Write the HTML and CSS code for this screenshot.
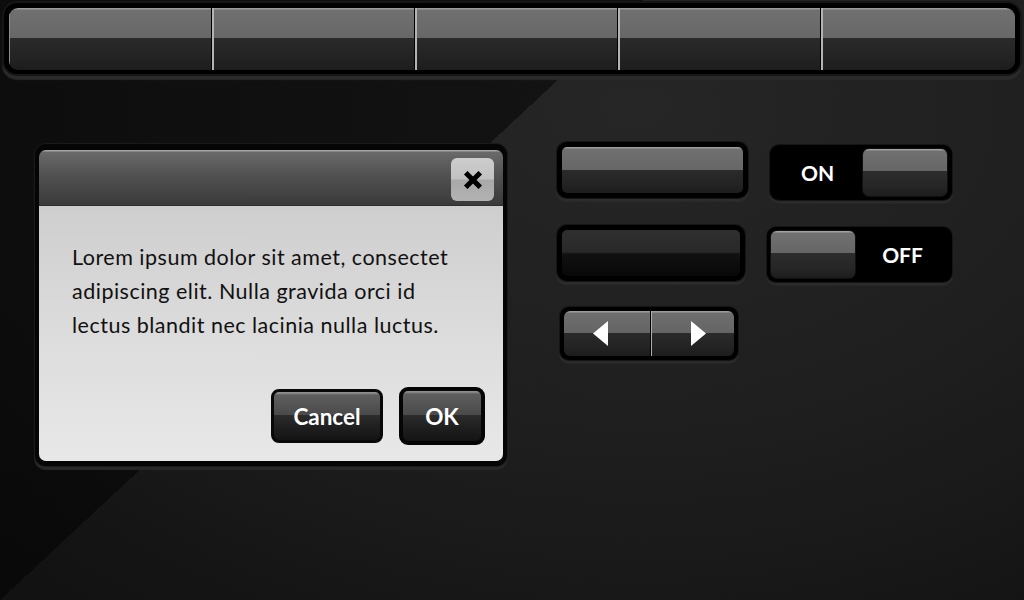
FILE: index.html
```html
<!DOCTYPE html>
<html lang="en">
<head>
<meta charset="utf-8">
<title>Dark UI Kit</title>
<link rel="stylesheet" href="styles.css">
</head>
<body>
<div class="screen">
  <nav class="topnav">
    <div class="navbar">
      <span class="seg"></span>
      <span class="seg"></span>
      <span class="seg"></span>
      <span class="seg"></span>
      <span class="seg"></span>
    </div>
  </nav>
  <main class="content">
    <section class="dialog">
      <header class="dlg-title">
        <button class="close" aria-label="Close">
          <svg width="20" height="18" viewBox="0 0 20 18"><path d="M4.5 3.5 L15.5 14.5 M15.5 3.5 L4.5 14.5" stroke="#000" stroke-width="5" stroke-linecap="square" fill="none"/></svg>
        </button>
      </header>
      <div class="dlg-body">
        <p class="dlg-text">Lorem ipsum dolor sit amet, consectet<br>adipiscing elit. Nulla gravida orci id<br>lectus blandit nec lacinia nulla luctus.</p>
        <div class="dlg-actions">
          <button class="dbtn cancel">Cancel</button>
          <button class="dbtn ok">OK</button>
        </div>
      </div>
    </section>
    <div class="controls">
      <button class="gbtn btn-a"></button>
      <div class="toggle toggle-on">
        <span class="tlabel">ON</span>
        <span class="knob"></span>
      </div>
      <button class="gbtn pressed btn-b"></button>
      <div class="toggle toggle-off">
        <span class="knob"></span>
        <span class="tlabel">OFF</span>
      </div>
      <div class="arrows">
        <button class="aseg aleft"><svg width="15" height="25" viewBox="0 0 15 25"><polygon points="0,12.5 15,0 15,25" fill="#fff"/></svg></button>
        <button class="aseg aright"><svg width="15" height="25" viewBox="0 0 15 25"><polygon points="15,12.5 0,0 0,25" fill="#fff"/></svg></button>
      </div>
    </div>
  </main>
</div>
</body>
</html>
```
FILE: styles.css
```css
* { box-sizing: border-box; }
html, body { margin: 0; padding: 0; }
body {
  width: 1024px;
  height: 600px;
  overflow: hidden;
  font-family: Lato, "Open Sans", sans-serif;
  background: #111;
}
button {
  font-family: inherit;
  padding: 0;
  margin: 0;
  cursor: pointer;
}
.screen {
  width: 1024px;
  height: 600px;
  display: flex;
  flex-direction: column;
  background:
    linear-gradient(137deg, rgba(0,0,0,0.5) 38.6%, rgba(0,0,0,0) 38.6%),
    radial-gradient(ellipse 900px 620px at 62% 18%, #262626 0%, #1e1e1e 55%, #121212 100%);
}

/* top navigation */
.topnav {
  margin: 3px 4px 0;
  padding: 5px 5px 4px;
  background: #000;
  border-radius: 13px;
  box-shadow: 0 0 0 2px #161616, 0 4px 1px 2px #2a2a2a;
}
.navbar {
  display: flex;
  height: 62px;
  border-radius: 9px;
  overflow: hidden;
}
.seg {
  flex: 0 0 203px;
  background: linear-gradient(to bottom, #9a9a9a 0, #9a9a9a 1px, #707070 2px, #676767 49%, #2a2a2a 49%, #232323 80%, #1d1d1d 100%);
}
.seg:first-child { flex-basis: 202px; box-shadow: inset 1px 0 0 #8a8a8a; }
.seg:last-child { flex: 1; }
.seg + .seg {
  border-left: 1px solid #000;
  box-shadow: inset 2px 0 0 #b4b4b4;
}

/* main content */
.content {
  display: flex;
  align-items: flex-start;
  padding: 68px 0 0 35px;
  gap: 50px;
}

/* dialog */
.dialog {
  width: 472px;
  height: 322px;
  margin-top: 2px;
  padding: 6px 4px 5px;
  background: #050505;
  border-radius: 11px;
  display: flex;
  flex-direction: column;
  box-shadow: 0 0 0 1px #1a1a1a, 0 3px 1px 1px #282828;
}
.dlg-title {
  height: 56px;
  flex: none;
  display: flex;
  justify-content: flex-end;
  align-items: flex-start;
  padding: 8px 9px 0 0;
  border-radius: 7px 7px 0 0;
  background: linear-gradient(to bottom, #a4a4a4 0, #a4a4a4 1px, #6a6a6a 2px, #545454 40%, #3a3a3a 100%);
  border-bottom: 1px solid #2e2e2e;
}
.close {
  width: 43px;
  height: 43px;
  border: none;
  border-radius: 6px;
  background: linear-gradient(to bottom, #cdcdcd 0, #c2c2c2 48%, #a9a9a9 52%, #b2b2b2 100%);
  display: flex;
  align-items: center;
  justify-content: center;
}
.dlg-body {
  flex: 1;
  display: flex;
  flex-direction: column;
  padding: 34px 18px 16px 33px;
  border-radius: 0 0 7px 7px;
  background: linear-gradient(to bottom, #cecece 0%, #dcdcdc 50%, #e8e8e8 100%);
}
.dlg-text {
  margin: 0;
  font-size: 21.5px;
  line-height: 34px;
  color: #111;
  letter-spacing: 0.5px;
  white-space: nowrap;
}
.dlg-actions {
  margin-top: auto;
  display: flex;
  justify-content: flex-end;
  align-items: center;
  gap: 16px;
}
.dbtn {
  color: #fff;
  font-weight: 700;
  font-size: 22.5px;
  background: linear-gradient(to bottom, #8e8e8e 0, #8e8e8e 1px, #5e5e5e 3px, #4a4a4a 48%, #2c2c2c 48%, #1e1e1e 75%, #141414 100%);
  border-radius: 8px;
}
.cancel {
  width: 112px;
  height: 54px;
  border: 3px solid #080808;
}
.ok {
  width: 86px;
  height: 58px;
  border: 4px solid #050505;
  border-radius: 9px;
}

/* right controls */
.controls {
  display: grid;
  grid-template-columns: 191px 185px;
  grid-template-rows: 58px 58px 56px;
  column-gap: 19px;
  row-gap: 25px;
  align-items: start;
}
.gbtn {
  border: 5px solid #000;
  border-radius: 10px;
  background: linear-gradient(to bottom, #9c9c9c 0, #9c9c9c 1px, #707070 2px, #676767 49%, #2b2b2b 49%, #242424 80%, #1c1c1c 100%);
  box-shadow: 0 0 0 1px #151515, 0 3px 1px 1px #2c2c2c;
}
.btn-a { width: 191px; height: 56px; }
.btn-b { width: 188px; height: 56px; }
.pressed {
  background: linear-gradient(to bottom, #2f2f2f 0, #292929 48%, #111 52%, #080808 100%);
}

.toggle {
  display: flex;
  align-items: stretch;
  background: #000;
  border-radius: 9px;
  padding: 3px;
  box-shadow: 0 0 0 1px #151515, 0 3px 1px 1px #2a2a2a;
}
.toggle-on { width: 182px; height: 55px; margin: 3px 0 0 3px; padding-right: 4px; }
.toggle-off { width: 185px; height: 55px; margin-top: 2px; }
.tlabel {
  flex: 1;
  display: flex;
  align-items: center;
  justify-content: center;
  color: #fff;
  font-weight: 700;
  font-size: 21px;
}
.knob {
  width: 86px;
  border-radius: 7px;
  border: 1px solid #111;
  background: linear-gradient(to bottom, #a0a0a0 0, #a0a0a0 1px, #707070 2px, #666 46%, #2d2d2d 46%, #262626 80%, #1d1d1d 100%);
}

.arrows {
  grid-column: 1;
  width: 178px;
  height: 53px;
  margin: -1px 0 0 3px;
  display: flex;
  border: 4px solid #000;
  border-radius: 9px;
  overflow: hidden;
  background: #000;
  box-shadow: 0 0 0 1px #151515, 0 3px 1px 1px #2a2a2a;
}
.aseg {
  flex: none;
  border: none;
  display: flex;
  align-items: center;
  justify-content: center;
  background: linear-gradient(to bottom, #9c9c9c 0, #9c9c9c 1px, #6e6e6e 2px, #656565 48%, #2b2b2b 48%, #232323 80%, #1c1c1c 100%);
}
.aleft { width: 86px; padding-right: 14px; border-radius: 6px 0 0 6px; }
.aright {
  width: 84px;
  padding-left: 12px;
  border-left: 1px solid #000;
  box-shadow: inset 1px 0 0 #b0b0b0;
  border-radius: 0 6px 6px 0;
}
```
